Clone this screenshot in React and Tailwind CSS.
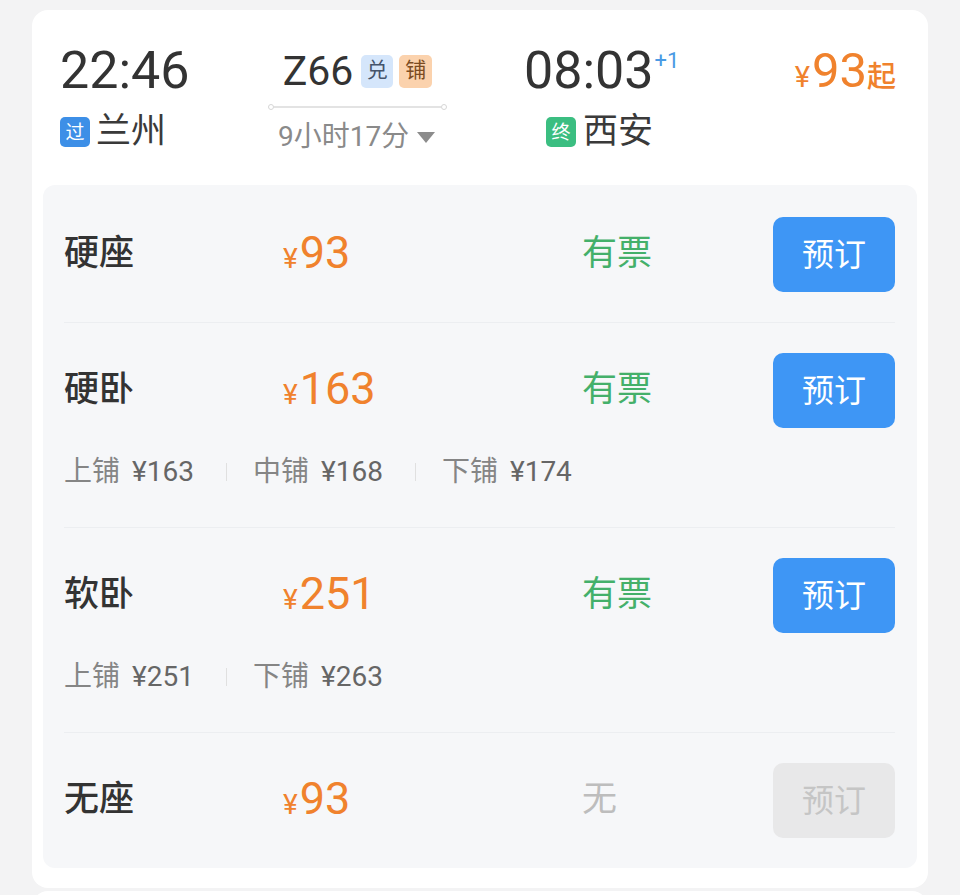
const font = { fontFamily: 'Roboto, "Noto Sans CJK SC", sans-serif' };

const seats = [
  { name: '硬座', price: 93, status: '有票', available: true, berths: [] },
  {
    name: '硬卧',
    price: 163,
    status: '有票',
    available: true,
    berths: [
      { label: '上铺', price: 163 },
      { label: '中铺', price: 168 },
      { label: '下铺', price: 174 },
    ],
  },
  {
    name: '软卧',
    price: 251,
    status: '有票',
    available: true,
    berths: [
      { label: '上铺', price: 251 },
      { label: '下铺', price: 263 },
    ],
  },
  { name: '无座', price: 93, status: '无', available: false, berths: [] },
];

function StationBadge({ text, color }) {
  return (
    <span className={`w-[30px] h-[30px] rounded-[5px] flex items-center justify-center text-white text-[19px] leading-none ${color}`}>
      {text}
    </span>
  );
}

function SeatRow({ seat, first }) {
  return (
    <div className={`${first ? 'pt-[32px]' : 'pt-[30px] border-t border-[#eceef1]'} pb-[30px]`}>
      <div className="flex items-center h-[75px]">
        <div className="w-[219px] text-[35px] font-medium text-[#333]">{seat.name}</div>
        <div className="w-[299px] flex items-baseline text-[#f0822d]">
          <span className="text-[28px] mr-[2px]">¥</span>
          <span className="text-[45px] leading-none">{seat.price}</span>
        </div>
        <div className={`flex-1 text-[35px] ${seat.available ? 'text-[#44b06a]' : 'text-[#bdbdbd]'}`}>
          {seat.status}
        </div>
        <button
          className={`w-[122px] h-[75px] rounded-[10px] text-[32px] ${
            seat.available ? 'bg-[#3e96f5] text-white' : 'bg-[#e8e8e9] text-[#c5c5c5]'
          }`}
        >
          预订
        </button>
      </div>
      {seat.berths.length > 0 && (
        <div className="flex items-center h-[36px] mt-[26px] mb-[7px] text-[28px]">
          {seat.berths.map((b, i) => (
            <div key={b.label} className="flex items-center">
              {i > 0 && <span className="w-px h-[18px] bg-[#e0e0e0] ml-[32px] mr-[26px]"></span>}
              <span className="text-[#858585]">{b.label}</span>
              <span className="text-[#666] ml-[12px]">¥{b.price}</span>
            </div>
          ))}
        </div>
      )}
    </div>
  );
}

export default function App() {
  return (
    <div className="min-h-[895px] bg-[#f3f3f4] pt-[10px] px-[32px] overflow-hidden" style={font}>
      <div className="bg-white rounded-[16px] pb-[20px]">
        {/* header */}
        <div className="h-[175px] flex items-start pt-[35px] pl-[28px] pr-[32px]">
          <div className="w-[208px] flex flex-col">
            <div className="text-[52px] leading-[52px] text-[#333]">22:46</div>
            <div className="flex items-center h-[34px] mt-[18px]">
              <StationBadge text="过" color="bg-[#3d8fe7]" />
              <span className="ml-[6px] text-[35px] text-[#3a3a3a]">兰州</span>
            </div>
          </div>

          <div className="w-[179px] flex flex-col">
            <div className="flex items-center justify-center h-[40px] mt-[6px]">
              <span className="text-[41px] text-[#333] leading-none">Z66</span>
              <span className="ml-[8px] w-[32px] h-[33px] rounded-[5px] bg-[#d5e6fb] text-[#45546b] text-[21px] flex items-center justify-center">兑</span>
              <span className="ml-[6px] w-[33px] h-[33px] rounded-[5px] bg-[#fbd2ad] text-[#7c4c22] text-[21px] flex items-center justify-center">铺</span>
            </div>
            <div className="flex items-center mt-[13px]">
              <span className="w-[6px] h-[6px] rounded-full border border-[#d6d6d6]"></span>
              <span className="flex-1 h-[2px] bg-[#e3e3e3]"></span>
              <span className="w-[6px] h-[6px] rounded-full border border-[#d6d6d6]"></span>
            </div>
            <div className="flex items-center h-[30px] mt-[12px] pl-[10px] text-[28px] text-[#8a8a8a]">
              <span>9小时17分</span>
              <svg className="ml-[8px]" width="18" height="11" viewBox="0 0 18 11">
                <path d="M0 0h18L9 11z" fill="#8c8c8c" />
              </svg>
            </div>
          </div>

          <div className="ml-[77px] flex flex-col">
            <div className="flex items-start">
              <span className="text-[52px] leading-[52px] text-[#333]">08:03</span>
              <span className="text-[22px] leading-none text-[#4a9ae4] mt-[5px] ml-[1px]">+1</span>
            </div>
            <div className="flex items-center h-[34px] mt-[18px] pl-[22px]">
              <StationBadge text="终" color="bg-[#3bbe81]" />
              <span className="ml-[7px] text-[35px] text-[#3a3a3a]">西安</span>
            </div>
          </div>

          <div className="flex-1 flex justify-end items-baseline text-[#f0822d] h-[52px]">
            <span className="text-[29px] mr-[2px]">¥</span>
            <span className="text-[49px] leading-[52px]">93</span>
            <span className="text-[29px] font-medium">起</span>
          </div>
        </div>

        {/* seats */}
        <div className="mx-[11px] bg-[#f6f7f9] rounded-[12px] pl-[21px] pr-[22px]">
          {seats.map((seat, i) => (
            <SeatRow key={seat.name} seat={seat} first={i === 0} />
          ))}
        </div>
      </div>
      <div className="mt-[3px] h-[40px] bg-white rounded-t-[16px]"></div>
    </div>
  );
}
